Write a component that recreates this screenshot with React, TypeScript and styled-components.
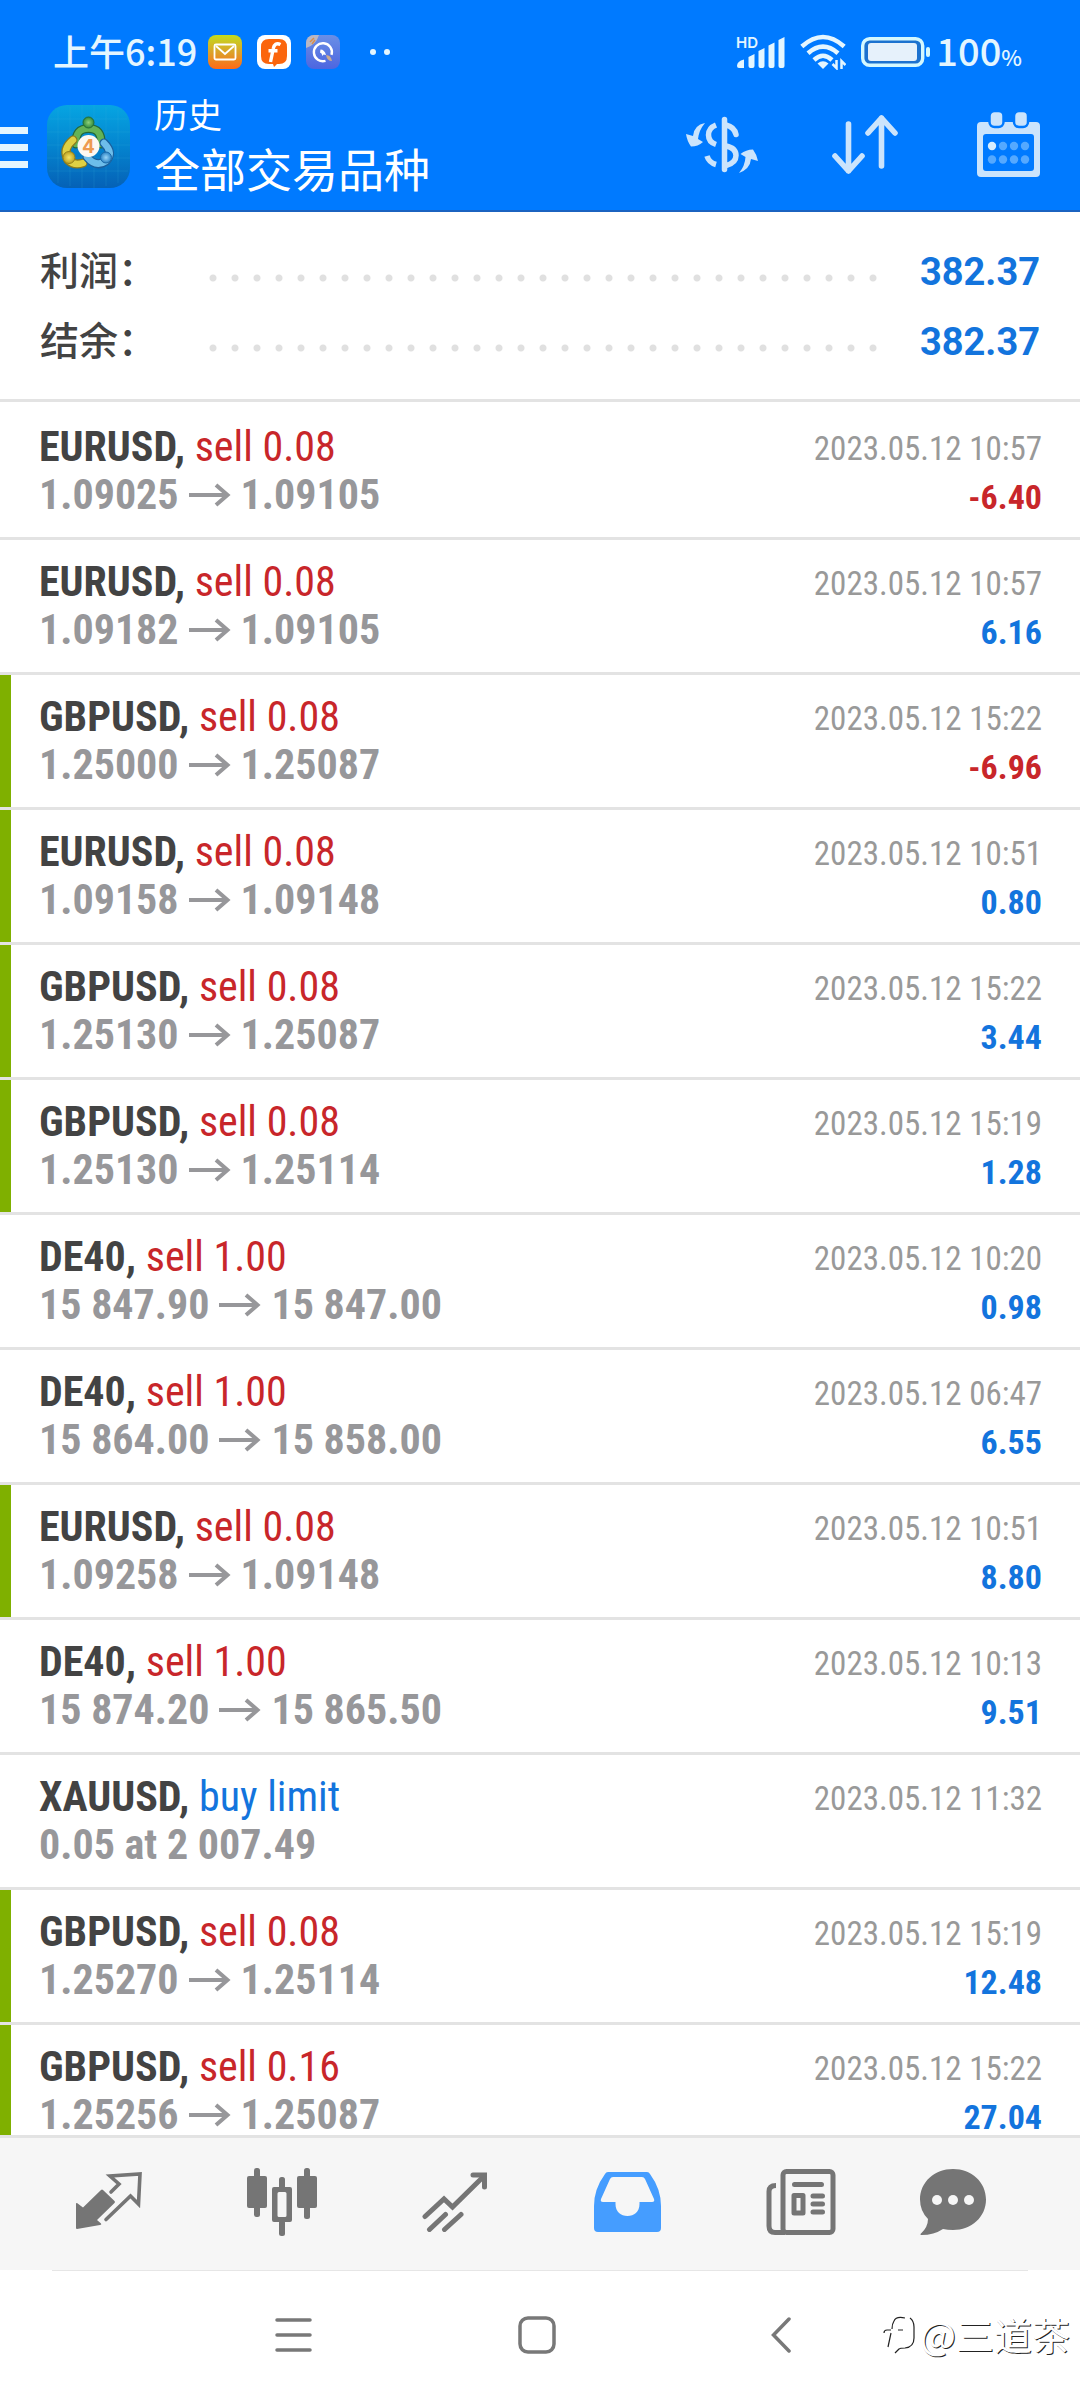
import React from "react";
import styled, { createGlobalStyle } from "styled-components";

const condensed = `"Roboto Condensed", "Liberation Sans Narrow", Roboto, "Noto Sans CJK SC", sans-serif`;
const cjk = `"Noto Sans CJK SC", Roboto, sans-serif`;

const colors = {
  brand: "#007aff",
  brandEdge: "#1b63c0",
  light: "#e4f6ff",
  action: "#cbe4fc",
  text: "#434343",
  muted: "#97979a",
  date: "#999999",
  buy: "#1374dd",
  sell: "#c8262a",
  line: "#e3e3e3",
  mark: "#7fb000",
  tab: "#757575",
  tabActive: "#459dff",
};

const GlobalStyle = createGlobalStyle`
  *, *::before, *::after { box-sizing: border-box; }
  body { margin: 0; background: #fff; font-family: ${condensed}; }
  button { margin: 0; padding: 0; border: 0; background: none; color: inherit; font: inherit; cursor: pointer; }
  svg { display: block; flex: none; }
`;

const Screen = styled.div`
  position: relative;
  display: flex;
  flex-direction: column;
  height: 100vh;
  overflow: hidden;
  background: #fff;
`;

const Header = styled.header`
  flex: none;
  background: ${colors.brand};
  border-bottom: 2px solid ${colors.brandEdge};
  color: #fff;
`;

const StatusBar = styled.div`
  display: flex;
  align-items: center;
  justify-content: space-between;
  height: 104px;
  padding: 0 58px 0 53px;
  color: ${colors.light};
  font-family: ${cjk};
`;

const StatusGroup = styled.div`
  display: flex;
  align-items: center;
  gap: 15px;
`;

const Clock = styled.time`
  padding-bottom: 4px;
  font-size: 36px;
  line-height: 48px;
  font-weight: 500;
  margin-right: -4px;
`;

const Battery = styled.span`
  padding-bottom: 4px;
  font-size: 38px;
  line-height: 48px;
  font-weight: 500;
  margin-left: -10px;
  small {
    font-size: 22px;
    line-height: 24px;
  }
`;

const AppBar = styled.div`
  display: flex;
  align-items: center;
  height: 106px;
  padding: 0 34px 22px 0;
`;

const MenuButton = styled.button`
  margin-right: 19px;
`;

const Titles = styled.div`
  display: flex;
  flex-direction: column;
  margin-left: 24px;
  padding-bottom: 4px;
  font-family: ${cjk};
`;

const Caption = styled.span`
  font-size: 34px;
  line-height: 46px;
`;

const Title = styled.h1`
  margin: 0;
  font-size: 46px;
  line-height: 60px;
  font-weight: 400;
`;

const Actions = styled.div`
  display: flex;
  align-items: center;
  gap: 67px;
  margin-left: auto;
  padding-bottom: 2px;
  color: ${colors.action};
`;

const ActionButton = styled.button`
  display: grid;
  place-items: center;
  width: 76px;
  height: 76px;
`;

const Summary = styled.dl`
  flex: none;
  margin: 0;
  padding: 25px 40px 22px;
  border-bottom: 3px solid ${colors.line};
`;

const SummaryRow = styled.div`
  display: flex;
  align-items: center;
  height: 70px;
`;

const SummaryLabel = styled.dt`
  width: 162px;
  padding-bottom: 8px;
  color: ${colors.text};
  font: 500 39px/56px ${cjk};
`;

const Leader = styled.span`
  flex: 1;
  height: 8px;
  margin: 12px 30px 0 0;
  background: radial-gradient(circle at 11px 4px, #e0e0e0 3px, transparent 4px) 0 0 / 22px 8px repeat-x;
`;

const SummaryValue = styled.dd`
  margin: 0;
  color: ${colors.buy};
  font: 700 38px/56px Roboto, sans-serif;
`;

const DealList = styled.ul`
  flex: 1;
  min-height: 0;
  margin: 0;
  padding: 0;
  list-style: none;
  overflow-y: auto;
  scrollbar-width: none;
`;

const DealRow = styled.li<{ $marked?: boolean }>`
  display: flex;
  justify-content: space-between;
  height: 135px;
  padding: 18px 38px 0 39px;
  border-top: 3px solid transparent;
  background: linear-gradient(${(p) => (p.$marked ? colors.mark : "transparent")} 0 0) 0 0 / 11px 100% no-repeat;
  background-clip: padding-box;
  & + & {
    border-top-color: ${colors.line};
  }
`;

const DealSide = styled.div<{ $end?: boolean }>`
  display: flex;
  flex-direction: column;
  align-items: ${(p) => (p.$end ? "flex-end" : "flex-start")};
  font-size: ${(p) => (p.$end ? 34 : 42)}px;
  line-height: 48px;
  padding-top: ${(p) => (p.$end ? 2 : 0)}px;
  white-space: nowrap;
`;

const Symbol = styled.div`
  color: ${colors.text};
  font-weight: 700;
`;

const Kind = styled.span<{ $buy?: boolean }>`
  color: ${(p) => (p.$buy ? colors.buy : colors.sell)};
  font-weight: 400;
`;

const Prices = styled.div`
  display: flex;
  align-items: center;
  gap: 10px;
  color: ${colors.muted};
  font-weight: 700;
`;

const DateText = styled.time`
  color: ${colors.date};
  font-size: 33px;
`;

const Amount = styled.div<{ $loss?: boolean }>`
  color: ${(p) => (p.$loss ? colors.sell : colors.buy)};
  font-weight: 700;
`;

const TabBar = styled.nav`
  flex: none;
  display: grid;
  grid-template-columns: repeat(5, 173fr) 132fr;
  height: 135px;
  padding: 0 61px 4px 22px;
  border-top: 3px solid ${colors.line};
  background: #f6f6f6;
`;

const Tab = styled.button<{ $active?: boolean }>`
  display: grid;
  place-items: center;
  color: ${(p) => (p.$active ? colors.tabActive : colors.tab)};
`;

const SystemNav = styled.nav`
  flex: none;
  display: grid;
  grid-template-columns: repeat(3, 1fr);
  height: 130px;
  padding: 0 177px 0 171px;
  background: linear-gradient(#e6e6e6 0 0) 50% 0 / calc(100% - 104px) 1px no-repeat;
  color: #787878;
`;

const SystemButton = styled.button`
  display: grid;
  place-items: center;
`;

const Watermark = styled.div`
  position: absolute;
  right: 10px;
  bottom: 39px;
  display: flex;
  align-items: center;
  gap: 4px;
  color: #fff;
  font: 400 38px/54px ${cjk};
  text-shadow: 1px 1px 0 #222;
`;

const MailBadge = () => (
  <svg width="34" height="34" viewBox="0 0 34 34">
    <defs>
      <linearGradient id="mail" x1="0" y1="0" x2="0" y2="1">
        <stop offset="0" stopColor="#c3dc1c" />
        <stop offset="0.5" stopColor="#dba32a" />
        <stop offset="1" stopColor="#ff6a18" />
      </linearGradient>
    </defs>
    <rect width="34" height="34" rx="8" fill="url(#mail)" />
    <rect x="6.5" y="9.5" width="21" height="15" rx="1.5" fill="none" stroke="#fff" strokeWidth="1.8" />
    <path d="M8 11l9 8 9-8" fill="none" stroke="#fff" strokeWidth="1.8" />
  </svg>
);

const LetterBadge = () => (
  <svg width="34" height="34" viewBox="0 0 34 34">
    <rect width="34" height="34" rx="8" fill="#fff" />
    <path d="M12 4h10q8 0 8 8v9q0 8-8 8h-2l-3 3-1-3h-4q-8 0-8-8v-9q0-8 8-8z" fill="#fb650c" />
    <path d="M23.500 9.500c-4-2-6.500 0-7.200 4L13.500 27M11.500 15.800h9" fill="none" stroke="#fff" strokeWidth="3.400" />
  </svg>
);

const RocketBadge = () => (
  <svg width="34" height="34" viewBox="0 0 34 34">
    <defs>
      <linearGradient id="rocket" x1="0" y1="0" x2="0" y2="1">
        <stop offset="0" stopColor="#6a8fe6" />
        <stop offset="1" stopColor="#4d66e0" />
      </linearGradient>
      <clipPath id="rocketClip"><rect width="34" height="34" rx="8" /></clipPath>
    </defs>
    <g clipPath="url(#rocketClip)">
      <rect width="34" height="34" fill="url(#rocket)" />
      <path d="M0 0h13Q10 10 0 13z" fill="#b9b7c4" />
      <path d="M4 7l4-4M6 9l3-4" stroke="#d98d4a" strokeWidth="1.500" />
      <path d="M19.500 25.800a9 9 0 1 1 6-6" fill="none" stroke="#fff" strokeWidth="2.400" />
      <path d="M14.500 14.500q4 0 5.500 5.500l-2.500-.5-1 1.500-1-2.500-1.500-1z" fill="#fff" />
      <path d="M20 20q5 0 6 6-5 0-6-6z" fill="#c9a98f" />
    </g>
  </svg>
);

const MoreDots = () => (
  <svg width="36" height="34" viewBox="0 0 36 34" fill={colors.light}>
    <circle cx="18" cy="17" r="3" />
    <circle cx="32" cy="17" r="3" />
  </svg>
);

const SignalIcon = () => (
  <svg width="50" height="38" viewBox="0 -2 50 38" fill="currentColor">
    <text x="1" y="13" fontSize="15" fontWeight="600" fontFamily="Inter, sans-serif">HD</text>
    <path d="M2 31q0-5 7-6.500V33H4q-2 0-2-2zM13.500 22l6-3v12q0 2-2 2h-2q-2 0-2-2zM23.500 16l6-3v18q0 2-2 2h-2q-2 0-2-2zM33.500 10.500l6-3V31q0 2-2 2h-2q-2 0-2-2zM43.500 5l6-3v29q0 2-2 2h-2q-2 0-2-2z" />
  </svg>
);

const WifiIcon = () => (
  <svg width="46" height="36" viewBox="0 0 46 36" fill="none" stroke="currentColor" strokeWidth="4.500">
    <path d="M1.800 12.500Q23-6.500 44.200 12.500M8 19.200Q23 6 38 19.200M14 26Q23 17.500 32 26" />
    <path d="M17.500 29.500Q23 25 28.500 29.500L23 35z" fill="currentColor" stroke="none" />
    <path d="M36.500 26v8l-4-4M41.500 35v-8l4 4" strokeWidth="2.500" />
  </svg>
);

const BatteryIcon = () => (
  <svg width="70" height="30" viewBox="0 0 70 30">
    <rect x="1.700" y="1.700" width="60" height="26.600" rx="7" fill="#1c72cf" stroke="#d3f8ff" strokeWidth="3.400" />
    <rect x="7" y="6" width="49" height="18" rx="3" fill="#e6f1fb" />
    <rect x="65" y="10" width="4" height="10" rx="2" fill="#d3f8ff" />
  </svg>
);

const AppLogo = () => (
  <svg width="83" height="83" viewBox="0 0 83 83" role="img" aria-label="MetaTrader 4">
    <defs>
      <linearGradient id="tile" x1="0" y1="0" x2="0" y2="1">
        <stop offset="0" stopColor="#06a5e2" />
        <stop offset="0.5" stopColor="#0484cf" />
        <stop offset="1" stopColor="#0561b6" />
      </linearGradient>
      <radialGradient id="green"><stop offset="0" stopColor="#8fd07a" /><stop offset="1" stopColor="#2f8a3a" /></radialGradient>
      <radialGradient id="yellow"><stop offset="0" stopColor="#f3e56a" /><stop offset="1" stopColor="#bda11e" /></radialGradient>
      <radialGradient id="blue"><stop offset="0" stopColor="#9bd6f7" /><stop offset="1" stopColor="#2a83c6" /></radialGradient>
    </defs>
    <rect width="83" height="83" rx="20" fill="url(#tile)" />
    <path d="M11 5v73M23 2v79M35 0v83M47 0v83M59 2v79M71 5v73M3 14h77M0 27h83M0 40h83M0 53h83M2 66h79" stroke="#3bb6e6" strokeOpacity="0.180" />
    <g fill="none" strokeLinecap="round">
      <path d="M29 39Q28 23.500 41.500 23.500T54 39" stroke="#24683a" strokeWidth="9" />
      <path d="M29 39Q28 23.500 41.500 23.500T54 39" stroke="#63b357" strokeWidth="6.500" />
      <path d="M26 35Q15 44 21 55q6 6 15 3" stroke="#8a7a1c" strokeWidth="9" />
      <path d="M26 35Q15 44 21 55q6 6 15 3" stroke="#ded044" strokeWidth="6.500" />
      <path d="M57 38q10 10 2 18-10 7-19-4" stroke="#1b5f9c" strokeWidth="9" />
      <path d="M57 38q10 10 2 18-10 7-19-4" stroke="#6dbdea" strokeWidth="6.500" />
    </g>
    <circle cx="41.500" cy="17.500" r="5.500" fill="url(#green)" stroke="#246c35" />
    <circle cx="22" cy="52.500" r="6" fill="url(#yellow)" stroke="#93801d" />
    <circle cx="59" cy="52.500" r="5.500" fill="url(#blue)" stroke="#1c6aa8" />
    <circle cx="41.500" cy="41" r="11" fill="#fdf8f2" />
    <text x="41.500" y="48" fontSize="19" fontWeight="700" fontFamily="Inter, sans-serif" textAnchor="middle" fill="#ee9a50">4</text>
  </svg>
);

const ExchangeIcon = () => (
  <svg width="74" height="58" viewBox="0 0 74 58" fill="none" stroke="currentColor" strokeWidth="5.500">
    <path d="M39.500 3.500v50" strokeLinecap="round" />
    <path d="M41 9Q49.500 11 51 18.500" strokeLinecap="round" />
    <path d="M31 9Q23.500 12 23.500 19T31 28.500M22 40Q24 46.500 31 48.500" />
    <path d="M41 30Q51 32 51 39.500T41 49.500" />
    <g fill="currentColor" stroke="none">
      <path d="M20 7Q9 9 8 20L1 18q1 7 5 12.500 7 0 12-4.500l-5-3Q14 14 20 7z" />
      <path d="M54 57Q65 53 66 43l7 2q-1-6-5-11.500-7 0-12.500 4.500l5 3Q60 50 54 57z" />
    </g>
  </svg>
);

const SortIcon = () => (
  <svg width="66" height="60" viewBox="0 0 66 60" fill="none" stroke="currentColor" strokeWidth="5.600" strokeLinecap="round" strokeLinejoin="round">
    <path d="M16.500 9v47M3 41l13.500 15L30 41M49.500 51V3M36 18L49.500 3 63 18" />
  </svg>
);

const CalendarIcon = () => (
  <svg width="63" height="66" viewBox="0 0 63 66">
    <path fillRule="evenodd" fill="currentColor" d="M4 10h55q4 0 4 4v47q0 4-4 4H4q-4 0-4-4V14q0-4 4-4zM9 22q-3 0-3 3v31q0 3 3 3h45q3 0 3-3V25q0-3-3-3z" />
    <g fill="currentColor" stroke={colors.brand} strokeWidth="2.500">
      <rect x="12.500" y="-1" width="14" height="16" rx="5" />
      <rect x="37" y="-1" width="14" height="16" rx="5" />
    </g>
    <g fill="#55a9ff">
      <circle cx="26" cy="34" r="4.200" /><circle cx="37" cy="34" r="4.200" /><circle cx="48" cy="34" r="4.200" />
      <circle cx="15" cy="47.500" r="4.200" /><circle cx="26" cy="47.500" r="4.200" /><circle cx="37" cy="47.500" r="4.200" /><circle cx="48" cy="47.500" r="4.200" />
    </g>
    <circle cx="15" cy="34" r="4.200" fill="#d9efff" />
  </svg>
);

const PriceArrow = () => (
  <svg width="42" height="24" viewBox="0 0 42 24" fill="none" stroke="currentColor" strokeWidth="4" role="img" aria-label="→">
    <path d="M0 12h39M27 2l11.500 10L27 22" />
  </svg>
);

const QuotesIcon = () => (
  <svg width="67" height="60" viewBox="0 0 67 60">
    <path d="M2 31l6 4.500L26 18q1-1 2 0l11.500 11q1 1 0 2L22 48l4 3.500q1 1-1 1.500L2 57q-1 0-1-1V32q0-1.500 1-1z" fill="currentColor" />
    <path d="M36 20l8-8-9-8 30-2-1.500 30-8-8L31 47.500" fill="none" stroke="currentColor" strokeWidth="3.600" strokeLinecap="round" />
  </svg>
);

const CandlesIcon = () => (
  <svg width="70" height="68" viewBox="0 0 70 68" fill="currentColor">
    <rect y="8" width="20" height="32" rx="2" /><rect x="7" width="6" height="49" rx="2.500" />
    <rect x="50" y="8" width="20" height="32" rx="2" /><rect x="57" width="6" height="51" rx="2.500" />
    <rect x="32" y="9" width="6" height="12" rx="2.500" /><rect x="32" y="52" width="6" height="16" rx="2.500" />
    <path fillRule="evenodd" d="M27 19h16q2 0 2 2v31q0 2-2 2H27q-2 0-2-2V21q0-2 2-2zM32 24q-1.500 0-1.500 1.500v22Q30.500 49 32 49h6q1.500 0 1.500-1.500v-22Q39.500 24 38 24z" />
  </svg>
);

const TradeIcon = () => (
  <svg width="66" height="60" viewBox="0 0 66 60" fill="none" stroke="currentColor" strokeWidth="5" strokeLinecap="round">
    <path d="M3 44.500L22 27l8.500 8L61 5M7.500 57.500l16-15M22.500 57.500l16.500-15" />
    <path d="M51 3h11.500v12" />
  </svg>
);

const InboxIcon = () => (
  <svg width="67" height="60" viewBox="0 0 67 60" fill="currentColor">
    <path fillRule="evenodd" d="M14 0h39q2 0 3 2 11 15 11 32v22q0 4-4 4H4q-4 0-4-4V34Q0 17 11 2q1-2 3-2zM19 5q-2 0-3 2L7 27q-1 3 2 3h12.500v2c0 8 5.500 12 12 12s12-4 12-12v-2H58q3 0 2-3L51 7q-1-2-3-2z" />
  </svg>
);

const NewsIcon = () => (
  <svg width="70" height="66" viewBox="0 0 70 66" fill="none" stroke="currentColor" strokeWidth="5">
    <rect x="17" y="2.500" width="50" height="61" rx="3.500" />
    <path d="M10 16.500q-7 0-7 6V57q0 6.500 6 6.500h10" />
    <rect x="28" y="26.500" width="9" height="17.500" strokeWidth="5" strokeLinejoin="round" />
    <path d="M28.500 15.500h27M47 27h9.500M47 35h9.500M47 43h9.500" strokeLinecap="round" />
  </svg>
);

const ChatIcon = () => (
  <svg width="66" height="66" viewBox="0 0 66 66">
    <path d="M33 0c18.500 0 33 13 33 30.500S51.500 61 33 61q-5.500 0-10-1-9 6-21.500 6-2 0-.5-1.500Q8 58 8 50 0 42 0 30.500C0 13 14.500 0 33 0z" fill="currentColor" />
    <g fill="#f6f6f6"><circle cx="17" cy="31" r="5" /><circle cx="33" cy="31" r="5" /><circle cx="49" cy="31" r="5" /></g>
  </svg>
);

const WatermarkLogo = () => (
  <svg width="36" height="42" viewBox="0 0 36 42" fill="none" stroke="#222" strokeWidth="1.200">
    <path d="M30 5q4 3 4 9v11q0 9-9 10-5 0-6 1l-4 4M25 5q-9-2-11 3-2 3-2 8M4 20q0-3 3-3h4M11 20L8 34M18 17h5" />
  </svg>
);

type Deal = {
  symbol: string;
  kind: string;
  buy?: boolean;
  open: string;
  close?: string;
  date: string;
  profit?: string;
  marked?: boolean;
};

const deals: Deal[] = [
  { symbol: "EURUSD", kind: "sell 0.08", open: "1.09025", close: "1.09105", date: "2023.05.12 10:57", profit: "-6.40" },
  { symbol: "EURUSD", kind: "sell 0.08", open: "1.09182", close: "1.09105", date: "2023.05.12 10:57", profit: "6.16" },
  { symbol: "GBPUSD", kind: "sell 0.08", open: "1.25000", close: "1.25087", date: "2023.05.12 15:22", profit: "-6.96", marked: true },
  { symbol: "EURUSD", kind: "sell 0.08", open: "1.09158", close: "1.09148", date: "2023.05.12 10:51", profit: "0.80", marked: true },
  { symbol: "GBPUSD", kind: "sell 0.08", open: "1.25130", close: "1.25087", date: "2023.05.12 15:22", profit: "3.44", marked: true },
  { symbol: "GBPUSD", kind: "sell 0.08", open: "1.25130", close: "1.25114", date: "2023.05.12 15:19", profit: "1.28", marked: true },
  { symbol: "DE40", kind: "sell 1.00", open: "15 847.90", close: "15 847.00", date: "2023.05.12 10:20", profit: "0.98" },
  { symbol: "DE40", kind: "sell 1.00", open: "15 864.00", close: "15 858.00", date: "2023.05.12 06:47", profit: "6.55" },
  { symbol: "EURUSD", kind: "sell 0.08", open: "1.09258", close: "1.09148", date: "2023.05.12 10:51", profit: "8.80", marked: true },
  { symbol: "DE40", kind: "sell 1.00", open: "15 874.20", close: "15 865.50", date: "2023.05.12 10:13", profit: "9.51" },
  { symbol: "XAUUSD", kind: "buy limit", buy: true, open: "0.05 at 2 007.49", date: "2023.05.12 11:32" },
  { symbol: "GBPUSD", kind: "sell 0.08", open: "1.25270", close: "1.25114", date: "2023.05.12 15:19", profit: "12.48", marked: true },
  { symbol: "GBPUSD", kind: "sell 0.16", open: "1.25256", close: "1.25087", date: "2023.05.12 15:22", profit: "27.04", marked: true },
];

const tabs = [
  { label: "行情", Icon: QuotesIcon },
  { label: "图表", Icon: CandlesIcon },
  { label: "交易", Icon: TradeIcon },
  { label: "历史", Icon: InboxIcon, active: true },
  { label: "新闻", Icon: NewsIcon },
  { label: "消息", Icon: ChatIcon },
];

export default function App() {
  return (
    <Screen>
      <GlobalStyle />
      <Header>
        <StatusBar>
          <StatusGroup>
            <Clock>上午6:19</Clock>
            <MailBadge />
            <LetterBadge />
            <RocketBadge />
            <MoreDots />
          </StatusGroup>
          <StatusGroup>
            <SignalIcon />
            <WifiIcon />
            <BatteryIcon />
            <Battery>100<small>%</small></Battery>
          </StatusGroup>
        </StatusBar>
        <AppBar>
          <MenuButton aria-label="菜单">
            <svg width="28" height="44" viewBox="0 -3 28 44" fill={colors.light}><path d="M0 0h28v7H0zM0 17h28v7H0zM0 34h28v7H0z" /></svg>
          </MenuButton>
          <AppLogo />
          <Titles>
            <Caption>历史</Caption>
            <Title>全部交易品种</Title>
          </Titles>
          <Actions>
            <ActionButton aria-label="交易品种"><ExchangeIcon /></ActionButton>
            <ActionButton aria-label="排序"><SortIcon /></ActionButton>
            <ActionButton aria-label="日期"><CalendarIcon /></ActionButton>
          </Actions>
        </AppBar>
      </Header>
      <Summary>
        {["利润：", "结余："].map((label) => (
          <SummaryRow key={label}>
            <SummaryLabel>{label}</SummaryLabel>
            <Leader />
            <SummaryValue>382.37</SummaryValue>
          </SummaryRow>
        ))}
      </Summary>
      <DealList>
        {deals.map((d, i) => (
          <DealRow key={i} $marked={d.marked}>
            <DealSide>
              <Symbol>{d.symbol}, <Kind $buy={d.buy}>{d.kind}</Kind></Symbol>
              <Prices>
                <span>{d.open}</span>
                {d.close && <><PriceArrow /><span>{d.close}</span></>}
              </Prices>
            </DealSide>
            <DealSide $end>
              <DateText>{d.date}</DateText>
              {d.profit && <Amount $loss={d.profit.startsWith("-")}>{d.profit}</Amount>}
            </DealSide>
          </DealRow>
        ))}
      </DealList>
      <TabBar>
        {tabs.map(({ label, Icon, active }) => (
          <Tab key={label} aria-label={label} $active={active}><Icon /></Tab>
        ))}
      </TabBar>
      <SystemNav>
        <SystemButton aria-label="最近任务">
          <svg width="37" height="36" viewBox="0 0 37 36" stroke="currentColor" strokeWidth="3.500" strokeLinecap="round"><path d="M2 3h33M2 18h33M2 33h33" /></svg>
        </SystemButton>
        <SystemButton aria-label="主屏幕">
          <svg width="38" height="38" viewBox="0 0 38 38" fill="none" stroke="currentColor" strokeWidth="3.500"><rect x="2" y="2" width="34" height="34" rx="8" /></svg>
        </SystemButton>
        <SystemButton aria-label="返回">
          <svg width="20" height="36" viewBox="0 0 20 36" fill="none" stroke="currentColor" strokeWidth="3.500" strokeLinecap="round"><path d="M18 2L2.500 18 18 34" /></svg>
        </SystemButton>
      </SystemNav>
      <Watermark><WatermarkLogo />@三道茶</Watermark>
    </Screen>
  );
}
